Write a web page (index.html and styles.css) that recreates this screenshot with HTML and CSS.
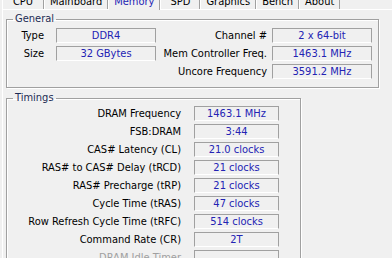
FILE: index.html
```html
<!DOCTYPE html>
<html lang="en">
<head>
    <meta charset="UTF-8">
    <title>CPU-Z Memory</title>
    <link rel="stylesheet" href="styles.css">
</head>
<body>
<div class="window">
    <div class="tabs">
        <div class="tab first">CPU</div>
        <div class="tab">Mainboard</div>
        <div class="tab active">Memory</div>
        <div class="tab">SPD</div>
        <div class="tab">Graphics</div>
        <div class="tab">Bench</div>
        <div class="tab">About</div>
    </div>
    <div class="panel">
        <fieldset class="group general">
            <legend>General</legend>
            <div class="general-grid">
                <span class="label">Type</span>
                <span class="value">DDR4</span>
                <span class="label">Channel #</span>
                <span class="value">2 x 64-bit</span>

                <span class="label">Size</span>
                <span class="value">32 GBytes</span>
                <span class="label">Mem Controller Freq.</span>
                <span class="value">1463.1 MHz</span>

                <span></span>
                <span></span>
                <span class="label">Uncore Frequency</span>
                <span class="value">3591.2 MHz</span>
            </div>
        </fieldset>
        <fieldset class="group timings">
            <legend>Timings</legend>
            <div class="timings-grid">
                <span class="label">DRAM Frequency</span>
                <span class="value">1463.1 MHz</span>
                <span class="label">FSB:DRAM</span>
                <span class="value">3:44</span>
                <span class="label">CAS# Latency (CL)</span>
                <span class="value">21.0 clocks</span>
                <span class="label">RAS# to CAS# Delay (tRCD)</span>
                <span class="value">21 clocks</span>
                <span class="label">RAS# Precharge (tRP)</span>
                <span class="value">21 clocks</span>
                <span class="label">Cycle Time (tRAS)</span>
                <span class="value">47 clocks</span>
                <span class="label">Row Refresh Cycle Time (tRFC)</span>
                <span class="value">514 clocks</span>
                <span class="label">Command Rate (CR)</span>
                <span class="value">2T</span>
                <span class="label disabled">DRAM Idle Timer</span>
                <span class="value"></span>
                <span class="label disabled">Total CAS# (tRDRAM)</span>
                <span class="value"></span>
            </div>
        </fieldset>
    </div>
</div>
</body>
</html>
```

FILE: styles.css
```css
body {
    margin: 0;
    background-color: #f0f0f0;
    font-family: "DejaVu Sans Condensed", "Liberation Sans", sans-serif;
    font-size: 11px;
    color: #000;
}
.window {
    width: 392px;
    height: 258px;
    overflow: hidden;
    padding-left: 2px;
    box-sizing: border-box;
}
.tabs {
    display: flex;
    align-items: flex-end;
    height: 9px;
}
.tab {
    height: 18px;
    min-width: 40px;
    padding: 4px 5px 0;
    box-sizing: border-box;
    line-height: 14px;
    text-align: center;
    border-left: 1px solid #fff;
    border-right: 1px solid #a0a0a0;
    flex-shrink: 0;
}
.tab.first {
    min-width: 42px;
}
.tab.active {
    height: 19px;
    margin-bottom: -1px;
    position: relative;
    z-index: 1;
    background-color: #f0f0f0;
    color: #2323b4;
}
.panel {
    border-top: 1px solid #fff;
    border-left: 1px solid #fff;
    height: 260px;
}
.group {
    margin: 0 0 0 3px;
    border: 1px solid #a0a0a0;
    box-shadow: inset 1px 1px 0 #fff, 1px 1px 0 #fff;
    box-sizing: border-box;
    min-width: 0;
}
.group legend {
    margin-left: 6px;
    padding: 0 2px;
    line-height: 12px;
    color: #1c2b53;
}
.general {
    margin-top: 3px;
    width: 373px;
    padding: 3px 6px 8px 0;
}
.timings {
    margin-top: 4px;
    width: 295px;
    padding: 2px 21px 8px 0;
}
.general-grid {
    display: grid;
    grid-template-columns: 49px 100px 1fr 100px;
    grid-auto-rows: 15px;
    row-gap: 3px;
}
.general-grid .label:nth-child(4n+1) {
    padding-right: 12px;
}
.general-grid .label:nth-child(4n+3) {
    padding-right: 5px;
}
.timings-grid {
    display: grid;
    grid-template-columns: 187px 85px;
    grid-auto-rows: 15px;
    row-gap: 3px;
}
.timings-grid .label {
    padding-right: 13px;
}
.label {
    text-align: right;
    line-height: 15px;
    white-space: nowrap;
}
.label.disabled {
    color: #a0a0a0;
}
.value {
    border-top: 1px solid #a0a0a0;
    border-left: 1px solid #a0a0a0;
    border-right: 1px solid #a0a0a0;
    border-bottom: 1px solid #fff;
    line-height: 13px;
    text-align: center;
    color: #2323b4;
    white-space: nowrap;
}
```
